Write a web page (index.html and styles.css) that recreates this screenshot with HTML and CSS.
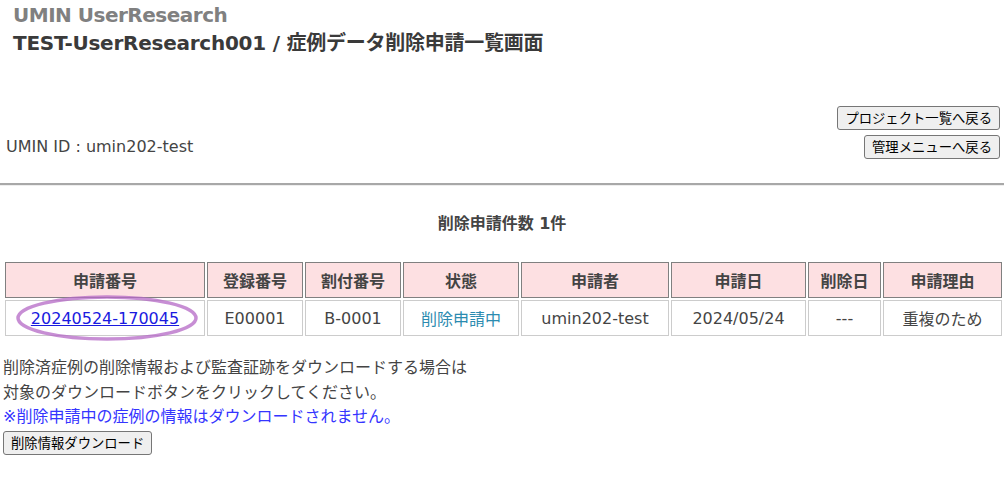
FILE: index.html
```html
<!DOCTYPE html>
<html lang="ja">
<head>
    <meta charset="UTF-8">
    <title>症例データ削除申請一覧画面</title>
    <link rel="stylesheet" href="styles.css">
</head>
<body>
    <div class="header">
        <div class="system-name">UMIN UserResearch</div>
        <div class="page-title">TEST-UserResearch001 / 症例データ削除申請一覧画面</div>
    </div>

    <div class="user-bar">
        <div class="user-id">UMIN ID : umin202-test</div>
        <div class="nav-buttons">
            <button class="btn">プロジェクト一覧へ戻る</button>
            <button class="btn">管理メニューへ戻る</button>
        </div>
    </div>

    <hr class="divider">

    <div class="count">削除申請件数 1件</div>

    <table class="list">
        <tr>
            <th class="w-no">申請番号</th>
            <th class="w-reg">登録番号</th>
            <th class="w-alloc">割付番号</th>
            <th class="w-status">状態</th>
            <th class="w-user">申請者</th>
            <th class="w-date">申請日</th>
            <th class="w-del">削除日</th>
            <th class="w-reason">申請理由</th>
        </tr>
        <tr>
            <td class="marked">
                <a href="#">20240524-170045</a>
                <!-- hand-drawn circle on the screenshot -->
                <svg class="circle" width="190" height="50" viewBox="0 0 190 50">
                    <ellipse cx="95" cy="25" rx="89" ry="21" fill="none" stroke="#b468c6" stroke-width="3.5" stroke-opacity="0.75"/>
                </svg>
            </td>
            <td>E00001</td>
            <td>B-0001</td>
            <td class="status">削除申請中</td>
            <td>umin202-test</td>
            <td>2024/05/24</td>
            <td>---</td>
            <td>重複のため</td>
        </tr>
    </table>

    <div class="download">
        <p>削除済症例の削除情報および監査証跡をダウンロードする場合は<br>対象のダウンロードボタンをクリックしてください。</p>
        <p class="notice">※削除申請中の症例の情報はダウンロードされません。</p>
        <button class="btn">削除情報ダウンロード</button>
    </div>
</body>
</html>
```

FILE: styles.css
```css
body {
    margin: 0;
    font-family: "DejaVu Sans", "Noto Sans CJK JP", sans-serif;
    font-size: 16px;
    color: #444;
    background: #fff;
}

.header {
    padding: 1px 0 0 13px;
    font-weight: bold;
    font-size: 20px;
    line-height: 28px;
}

.system-name {
    color: #808080;
    letter-spacing: -0.5px;
}

.page-title {
    color: #3a3a3a;
    margin-top: 0;
    letter-spacing: -0.25px;
}

.user-bar {
    display: flex;
    justify-content: space-between;
    align-items: flex-end;
    margin-top: 49px;
    padding: 0 4px 0 6px;
}

.user-id {
    line-height: 22px;
    margin-bottom: 1px;
}

.nav-buttons {
    display: flex;
    flex-direction: column;
    align-items: flex-end;
    gap: 5px;
}

.btn {
    font-family: "Noto Sans CJK JP", sans-serif;
    font-size: 13.33px;
    line-height: 18px;
    padding: 2px 7px;
    color: #000;
    background: #efefef;
    border: 1px solid #767676;
    border-radius: 3px;
}

.divider {
    margin: 24px 0 0;
    border: 0;
    border-top: 2px solid #a8a8a8;
    border-bottom: 1px solid #eee;
}

.count {
    text-align: center;
    font-weight: bold;
    margin-top: 26px;
    line-height: 24px;
}

.list {
    margin: 24px 0 0 3px;
    border-spacing: 2px;
    text-align: center;
}

.list th {
    height: 34px;
    padding: 0;
    background: #fde0e2;
    border: 1px solid #808080;
    color: #444;
    font-family: "Noto Sans CJK JP", sans-serif;
}

.list td {
    height: 34px;
    padding: 0;
    border: 1px solid #ccc;
}

.w-no { width: 198px; }
.w-reg { width: 94px; }
.w-alloc { width: 94px; }
.w-status { width: 114px; }
.w-user { width: 146px; }
.w-date { width: 133px; }
.w-del { width: 71px; }
.w-reason { width: 117px; }

.marked {
    position: relative;
}

.marked a {
    color: #1a1adf;
}

.circle {
    position: absolute;
    left: 6px;
    top: -8px;
    pointer-events: none;
}

.status {
    color: #2b8bb0;
}

.download {
    padding: 18px 3px 0;
    line-height: 24.5px;
}

.download p {
    margin: 0;
}

.notice {
    color: #3535ff;
}

.download .btn {
    margin-top: 1px;
}
```
